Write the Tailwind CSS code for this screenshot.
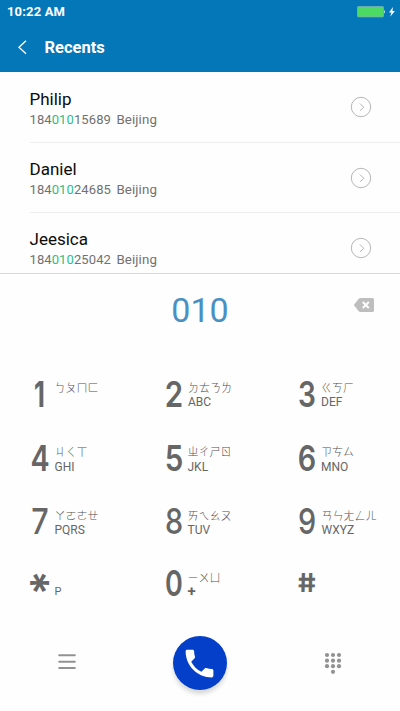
<!DOCTYPE html>
<html lang="en">
<head>
<meta charset="utf-8">
<meta name="viewport" content="width=device-width, initial-scale=1">
<title>Dialer</title>
<script src="https://cdn.jsdelivr.net/npm/@tailwindcss/browser@4"></script>
</head>
<body class="w-[400px] h-[711px] overflow-hidden bg-[#fefefe] font-[Roboto,'Noto_Sans_CJK_TC',sans-serif] flex flex-col">
<header class="h-[72px] shrink-0 bg-[#0477b9] text-white">
  <div class="h-6 flex items-center justify-between pl-[7px] pr-1">
    <span class="text-[13px] font-bold leading-6 tracking-[0.15px]">10:22 AM</span>
    <svg width="40" height="14" viewBox="0 0 40 14" fill="none">
      <rect x="1.5" y="1.5" width="26" height="10.4" rx="1" fill="#4cd964" stroke="#78aebf" stroke-width=".8"/>
      <path d="M28 4.700q1.500 2 0 4z" fill="#fff"/>
      <path d="M37 2 33 7.400h2.400L34.200 11.800l4.700-5.700h-2.500z" fill="#fff"/>
    </svg>
  </div>
  <div class="h-12 flex items-center pl-[17px]">
    <svg width="12" height="16" viewBox="0 0 12 16" fill="none" stroke="#fff" stroke-width="1.3"><path d="M9 .8 2 7.3 9 13.8"/></svg>
    <h1 class="ml-[15.5px] text-[16.5px] font-bold leading-6">Recents</h1>
  </div>
</header>

<main class="h-[201px] shrink-0 overflow-hidden pl-[29.5px]">
  <div class="h-[70.5px] flex items-start justify-between border-b border-[#eeeeee] pr-7">
    <div class="pt-[17px]">
      <div class="text-[17px] leading-5 text-[#0b0b0b]">Philip</div>
      <div class="mt-px text-[13px] leading-[19px] text-[#717171] tracking-[0.1px]">184<span class="text-[#2ebd82]">010</span>15689<span class="ml-[5.5px] text-[13.300px]">Beijing</span></div>
    </div>
    <svg class="mt-6" width="22" height="22" viewBox="0 0 22 22" fill="none" stroke="#b7b7b7"><circle cx="11" cy="11" r="9.7"/><path d="m10 7.5 3.8 3.8-3.8 3.5"/></svg>
  </div>
  <div class="h-[70px] flex items-start justify-between border-b border-[#eeeeee] pr-7">
    <div class="pt-[16.500px]">
      <div class="text-[17px] leading-5 text-[#0b0b0b]">Daniel</div>
      <div class="mt-px text-[13px] leading-[19px] text-[#717171] tracking-[0.1px]">184<span class="text-[#2ebd82]">010</span>24685<span class="ml-[5.5px] text-[13.300px]">Beijing</span></div>
    </div>
    <svg class="mt-6" width="22" height="22" viewBox="0 0 22 22" fill="none" stroke="#b7b7b7"><circle cx="11" cy="11" r="9.7"/><path d="m10 7.5 3.8 3.8-3.8 3.5"/></svg>
  </div>
  <div class="h-[70px] flex items-start justify-between pr-7">
    <div class="pt-[16.500px]">
      <div class="text-[17px] leading-5 text-[#0b0b0b]">Jeesica</div>
      <div class="mt-px text-[13px] leading-[19px] text-[#717171] tracking-[0.1px]">184<span class="text-[#2ebd82]">010</span>25042<span class="ml-[5.5px] text-[13.300px]">Beijing</span></div>
    </div>
    <svg class="mt-6" width="22" height="22" viewBox="0 0 22 22" fill="none" stroke="#b7b7b7"><circle cx="11" cy="11" r="9.7"/><path d="m10 7.5 3.8 3.8-3.8 3.5"/></svg>
  </div>
</main>

<section class="h-[90px] shrink-0 border-t border-[#d9d9d9] grid grid-cols-3 items-start">
  <span></span>
  <div class="pt-[16px] text-center text-[34px] leading-10 text-[#4a90c3]">010</div>
  <svg class="justify-self-end mr-[25px] mt-[23px]" width="22" height="16" viewBox="0 0 22 16"><path d="M.8 8 5.5 2.1Q6.3 1 7.6 1H19.500Q21 1 21 2.500v11q0 1.500-1.500 1.500H7.600q-1.300 0-2.100-1.100z" fill="#bebebe"/><path d="m9.800 5 6 6m0-6-6 6" stroke="#fff" stroke-width="1.900"/></svg>
</section>

<section class="h-[252px] shrink-0 pl-[30px] pt-[13px] grid grid-cols-[133.5px_133.500px_1fr] grid-rows-[64px_63px_61.500px_63px] text-[#666]">
  <div class="flex"><span class="w-[19px] flex justify-center scale-x-70 font-[Inter] text-[36px] font-bold leading-[36px]">1</span><div class="ml-[5.500px] pt-[4px]"><div class="font-['Noto_Sans_CJK_TC'] font-light text-[11px] leading-[14px] text-[#505050]">ㄅㄆㄇㄈ</div></div></div>
  <div class="flex"><span class="w-[20px] flex justify-center scale-x-82 font-[Inter] text-[36px] font-semibold leading-[36px]">2</span><div class="ml-[4.500px] pt-[4px]"><div class="font-['Noto_Sans_CJK_TC'] font-light text-[11px] leading-[14px] text-[#505050]">ㄉㄊㄋㄌ</div><div class="text-[12px] leading-[17px]">ABC</div></div></div>
  <div class="flex"><span class="w-[20px] flex justify-center scale-x-78 font-[Inter] text-[36px] font-semibold leading-[36px]">3</span><div class="ml-[4px] pt-[4px]"><div class="font-['Noto_Sans_CJK_TC'] font-light text-[11px] leading-[14px] text-[#505050]">ㄍㄎㄏ</div><div class="text-[12px] leading-[17px]">DEF</div></div></div>
  <div class="flex"><span class="w-[20px] flex justify-center scale-x-80 font-[Inter] text-[36px] font-semibold leading-[36px]">4</span><div class="ml-[4.500px] pt-[4px]"><div class="font-['Noto_Sans_CJK_TC'] font-light text-[11px] leading-[14px] text-[#505050]">ㄐㄑㄒ</div><div class="text-[12px] leading-[19px]">GHI</div></div></div>
  <div class="flex"><span class="w-[20px] flex justify-center scale-x-82 font-[Inter] text-[36px] font-semibold leading-[36px]">5</span><div class="ml-[4px] pt-[4px]"><div class="font-['Noto_Sans_CJK_TC'] font-light text-[11px] leading-[14px] text-[#505050]">ㄓㄔㄕㄖ</div><div class="text-[12px] leading-[19px]">JKL</div></div></div>
  <div class="flex"><span class="w-[20px] flex justify-center scale-x-80 font-[Inter] text-[36px] font-semibold leading-[36px]">6</span><div class="ml-[4px] pt-[4px]"><div class="font-['Noto_Sans_CJK_TC'] font-light text-[11px] leading-[14px] text-[#505050]">ㄗㄘㄙ</div><div class="text-[12px] leading-[19px]">MNO</div></div></div>
  <div class="flex"><span class="w-[20px] flex justify-center scale-x-85 font-[Inter] text-[36px] font-medium leading-[36px]">7</span><div class="ml-[4.500px] pt-[5px]"><div class="font-['Noto_Sans_CJK_TC'] font-light text-[11px] leading-[14px] text-[#505050]">ㄚㄛㄜㄝ</div><div class="text-[12px] leading-[17px]">PQRS</div></div></div>
  <div class="flex"><span class="w-[20px] flex justify-center scale-x-80 font-[Inter] text-[36px] font-medium leading-[36px]">8</span><div class="ml-[4px] pt-[5px]"><div class="font-['Noto_Sans_CJK_TC'] font-light text-[11px] leading-[14px] text-[#505050]">ㄞㄟㄠㄡ</div><div class="text-[12px] leading-[17px]">TUV</div></div></div>
  <div class="flex"><span class="w-[20px] flex justify-center scale-x-80 font-[Inter] text-[36px] font-medium leading-[36px]">9</span><div class="ml-[4.500px] pt-[5px]"><div class="font-['Noto_Sans_CJK_TC'] font-light text-[11px] leading-[14px] text-[#505050]">ㄢㄣㄤㄥㄦ</div><div class="text-[12px] leading-[17px]">WXYZ</div></div></div>
  <div class="flex"><span class="w-[20px] h-[20px] mt-[8px] -ml-[8px] mr-[8px] flex items-center justify-center rotate-90 font-[Inter] text-[46px] font-semibold leading-[20px]">*</span><div class="ml-[4.500px] pt-[19px] text-[11px] leading-[15px]">P</div></div>
  <div class="flex"><span class="w-[20px] flex justify-center scale-x-75 font-[Inter] text-[36px] font-semibold leading-[36px]">0</span><div class="ml-[4px] pt-[5px]"><div class="font-['Noto_Sans_CJK_TC'] font-light text-[11px] leading-[14px] text-[#505050]">ㄧㄨㄩ</div><div class="text-[15px] font-bold leading-[14px]">+</div></div></div>
  <div class="flex"><span class="w-[20px] h-[36px] flex justify-center skew-x-[8deg] scale-x-110 font-[Inter] text-[26px] font-bold leading-[36px]">#</span></div>
</section>

<footer class="h-[96px] shrink-0 grid grid-cols-3 items-start justify-items-center pt-[21px]">
  <svg class="mt-[17px]" width="18" height="18" viewBox="0 0 18 18" stroke="#929292" stroke-width="2" stroke-linecap="round"><path d="M1.200 2.300h15.600M1.200 8.800h15.600M1.200 15h15.600"/></svg>
  <div class="size-[54px] rounded-full bg-[#043fc9] shadow-[0_4px_4px_rgba(0,0,0,0.15)] flex items-center justify-center">
    <svg width="37" height="37" viewBox="0 0 24 24" fill="#fff"><path d="M6.620 10.790c1.440 2.830 3.760 5.140 6.590 6.590l2.200-2.200c.270-.270.670-.360 1.020-.240 1.120.370 2.330.570 3.570.570.550 0 1 .450 1 1V20c0 .550-.450 1-1 1-9.390 0-17-7.610-17-17 0-.550.450-1 1-1h3.500c.550 0 1 .450 1 1 0 1.250.200 2.450.570 3.570.110.350.030.740-.250 1.020z"/></svg>
  </div>
  <svg class="mt-[16px]" width="18" height="23" viewBox="0 0 18 23" fill="#929292"><circle cx="3" cy="3" r="2.100"/><circle cx="9" cy="3" r="2.100"/><circle cx="15" cy="3" r="2.100"/><circle cx="3" cy="8.700" r="2.100"/><circle cx="9" cy="8.700" r="2.100"/><circle cx="15" cy="8.700" r="2.100"/><circle cx="3" cy="14.200" r="2.100"/><circle cx="9" cy="14.200" r="2.100"/><circle cx="15" cy="14.200" r="2.100"/><circle cx="9" cy="19.800" r="2.100"/></svg>
</footer>
</body>
</html>
